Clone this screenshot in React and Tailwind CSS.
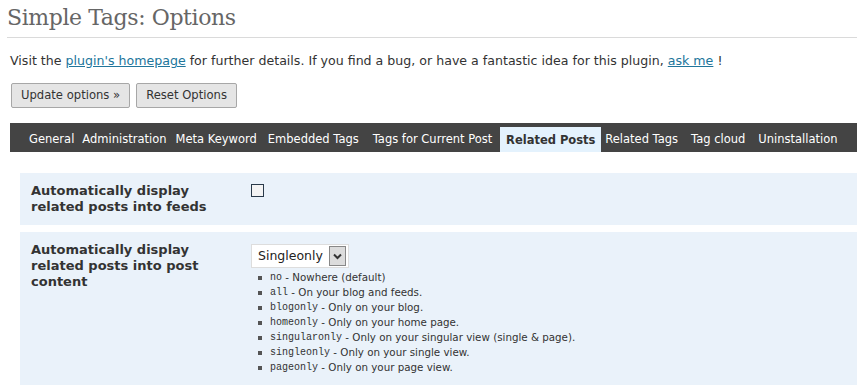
import React from "react";

// [label, left margin] — spacing taken from the screenshot
const tabs = [
  ["General", "ml-0"],
  ["Administration", "ml-[8px]"],
  ["Meta Keyword", "ml-[9px]"],
  ["Embedded Tags", "ml-[11px]"],
  ["Tags for Current Post", "ml-[14px]"],
  ["Related Posts", "ml-[8px]"],
  ["Related Tags", "ml-[4px]"],
  ["Tag cloud", "ml-[13px]"],
  ["Uninstallation", "ml-[13px]"],
];

const modes = [
  ["no", "Nowhere (default)"],
  ["all", "On your blog and feeds."],
  ["blogonly", "Only on your blog."],
  ["homeonly", "Only on your home page."],
  ["singularonly", "Only on your singular view (single & page)."],
  ["singleonly", "Only on your single view."],
  ["pageonly", "Only on your page view."],
];

const App = () => {
  return (
    <div className="min-h-[390px] bg-white text-[#333] font-['DejaVu_Sans',sans-serif] overflow-hidden">
      <div className="pl-[7px] pt-[2px]">
        <h2 className="font-['DejaVu_Serif',serif] text-[22px] tracking-[-0.4px] leading-[32px] text-[#666] pb-[3px] border-b border-[#dadada]">
          Simple Tags: Options
        </h2>
      </div>

      <p className="pl-[10px] mt-[15px] text-[12.6px] leading-[16px] whitespace-nowrap">
        Visit the{" "}
        <a href="#" className="text-[#21759b] underline">
          plugin's homepage
        </a>{" "}
        for further details. If you find a bug, or have a fantastic idea for
        this plugin,{" "}
        <a href="#" className="text-[#21759b] underline">
          ask me
        </a>{" "}
        !
      </p>

      <div className="flex gap-[6px] pl-[11px] mt-[14px]">
        <button className="h-[25px] px-[9px] text-[11.6px] text-[#333] bg-[#e5e5e5] border border-[#a7a7a7] rounded-[2px]">
          Update options »
        </button>
        <button className="h-[25px] px-[9px] text-[11.6px] text-[#333] bg-[#e5e5e5] border border-[#a7a7a7] rounded-[2px]">
          Reset Options
        </button>
      </div>

      <div className="ml-[10px] mt-[15px] h-[29px] bg-[#444] flex items-end pl-[19px] whitespace-nowrap">
        {tabs.map(([t, ml]) =>
          t === "Related Posts" ? (
            <span
              key={t}
              className={`${ml} shrink-0 w-[101px] h-[25px] pt-[1px] text-center bg-[#e4f2fd] text-[#333] font-bold text-[11.5px] leading-[25px]`}
            >
              {t}
            </span>
          ) : (
            <span
              key={t}
              className={`${ml} shrink-0 h-[29px] text-white text-[11.5px] leading-[33px]`}
            >
              {t}
            </span>
          )
        )}
      </div>

      <div className="ml-[20px] mt-[21px] flex flex-col gap-[7px]">
        <div className="bg-[#eaf2fa] h-[52px] flex pt-[10px]">
          <div className="w-[220px] pl-[11px] pr-[30px] font-bold text-[13px] leading-[16px] text-[#333]">
            Automatically display related posts into feeds
          </div>
          <div className="pl-[11px] pt-[1px]">
            <div className="w-[13px] h-[13px] border border-[#2a3a4a] bg-[#f4f4f4]" />
          </div>
        </div>

        <div className="bg-[#eaf2fa] h-[153px] flex pt-[10px]">
          <div className="w-[220px] pl-[11px] pr-[30px] font-bold text-[13px] leading-[16px] text-[#333]">
            Automatically display related posts into post content
          </div>
          <div className="pl-[11px] pt-[2px]">
            <div className="w-[98px] h-[24px] bg-white border border-[#ddd] flex items-center justify-between pl-[6px] pr-[2px]">
              <span className="text-[12.5px] text-[#222]">Singleonly</span>
              <span className="w-[17px] h-[20px] border border-[#888] bg-[#dcdcdc] flex items-center justify-center">
                <svg width="9" height="7" viewBox="0 0 9 7">
                  <path d="M1 1.5 L4.5 5 L8 1.5" stroke="#333" strokeWidth="2" fill="none" />
                </svg>
              </span>
            </div>
            <ul className="mt-[2px] pl-[7px] text-[10.3px] leading-[15px] text-[#333]">
              {modes.map(([code, desc]) => (
                <li key={code} className="flex items-center">
                  <span className="w-[4px] h-[4px] bg-[#555] mr-[8px]" />
                  <code className="font-['Liberation_Mono',monospace] text-[10px]">
                    {code}
                  </code>
                  <span>&nbsp;- {desc}</span>
                </li>
              ))}
            </ul>
          </div>
        </div>
      </div>
    </div>
  );
};

export default App;
